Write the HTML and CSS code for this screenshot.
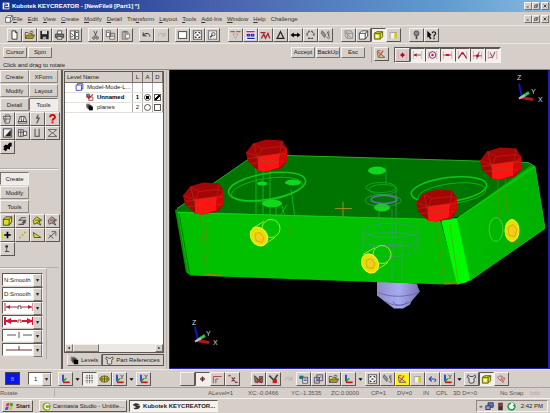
FILE: index.html
```
<!DOCTYPE html>
<html lang="en">
<head>
    <meta charset="UTF-8">
    <meta name="viewport" content="width=device-width, initial-scale=1.0">
    <title>Kubotek KEYCREATOR</title>
    <link rel="stylesheet" href="styles.css">
</head>
<body>
    <!-- Icon set, 12 x 12 grid -->
    <svg class="icon-defs" aria-hidden="true">
        <symbol id="i-app" viewBox="0 0 12 12"><rect x="1" y="1" width="10" height="10" fill="#fff"/><path d="M3 3h4l2 2H4v3h6M3 9h7" stroke="#112a80" stroke-width="1.4" fill="none"/></symbol>
        <symbol id="i-new" viewBox="0 0 12 12"><path d="M3 1h4l2 2v8H3z" fill="#fff" stroke="#222"/><path d="M7 1v2h2" fill="none" stroke="#222"/></symbol>
        <symbol id="i-open" viewBox="0 0 12 12"><path d="M1 10V3h3l1 1h4v2" fill="#f2e48a" stroke="#443"/><path d="M1 10l2-4h9l-2 4z" fill="#b79b20" stroke="#443"/><path d="M7 2c2-1 3 0 3 1" fill="none" stroke="#222"/></symbol>
        <symbol id="i-save" viewBox="0 0 12 12"><path d="M1 1h10v10H1z" fill="#222"/><path d="M3 1h6v4H3z" fill="#ddd"/><path d="M4 8h4v3H4z" fill="#aaa"/></symbol>
        <symbol id="i-print" viewBox="0 0 12 12"><path d="M4 1h5l-1 4H3z" fill="#fff" stroke="#444"/><path d="M1 5h10v4H1z" fill="#777" stroke="#333"/><path d="M3 8h6v3H3z" fill="#eee" stroke="#333"/></symbol>
        <symbol id="i-preview" viewBox="0 0 12 12"><path d="M1 1h5v10H1zM7 1h4v10H7z" fill="#fff" stroke="#444"/><path d="M2 4l3 3M8 3h2M8 8h2M2 8h2" stroke="#222"/></symbol>
        <symbol id="i-cut" viewBox="0 0 12 12"><path d="M4 1l3 7M8 1L5 8" stroke="#444" fill="none"/><circle cx="4" cy="9.500" r="1.500" fill="none" stroke="#444"/><circle cx="8" cy="9.500" r="1.500" fill="none" stroke="#444"/></symbol>
        <symbol id="i-copy" viewBox="0 0 12 12"><path d="M1 1h5v7H1zM5 4h6v7H5z" fill="#fff" stroke="#555"/><path d="M6 6h4M6 8h4M2 3h3" stroke="#555"/></symbol>
        <symbol id="i-paste" viewBox="0 0 12 12"><path d="M2 2h7v9H2z" fill="#b5ada5" stroke="#777"/><path d="M4 1h3v2H4z" fill="#666"/><path d="M6 5h5v5H6z" fill="#eee" stroke="#777"/></symbol>
        <symbol id="i-undo" viewBox="0 0 12 12"><path d="M2 3v4h4M2 7c2-4 8-4 8 1" fill="none" stroke="#333" stroke-width="1.200"/></symbol>
        <symbol id="i-redo" viewBox="0 0 12 12"><path d="M10 3v4H6M10 7c-2-4-8-4-8 1" fill="none" stroke="#b5aea8" stroke-width="1.200"/></symbol>
        <symbol id="i-window" viewBox="0 0 12 12"><rect x="1" y="2" width="10" height="8" fill="#fff" stroke="#333"/></symbol>
        <symbol id="i-fit" viewBox="0 0 12 12"><rect x="1" y="1" width="10" height="10" fill="#fff" stroke="#444"/><path d="M3 5V3h2M7 3h2v2M9 7v2H7M5 9H3V7M5 5l2 2M7 5L5 7" stroke="#222" fill="none"/></symbol>
        <symbol id="i-zoom" viewBox="0 0 12 12"><rect x="1" y="1" width="10" height="10" fill="#eee" stroke="#666"/><circle cx="7" cy="5" r="2" fill="none" stroke="#444"/><path d="M6 6L3 9" stroke="#444" stroke-width="1.500"/></symbol>
        <symbol id="i-mask" viewBox="0 0 12 12"><path d="M0 2h5M7 2h5" stroke="#e33" stroke-width="1.600"/><path d="M3 5l3 5 3-5z" fill="#ddd" stroke="#a99"/></symbol>
        <symbol id="i-select" viewBox="0 0 12 12"><rect x="0" y="0" width="12" height="12" fill="#eef"/><path d="M1 2h10" stroke="#d22" stroke-width="1.600"/><path d="M2 5h3v2H2zM7 5h3v2H7zM2 10h9" stroke="#22a" fill="none" stroke-width="1.300"/></symbol>
        <symbol id="i-wave" viewBox="0 0 12 12"><path d="M0 3h6M1 10l3-5 2 5 3-6 2 6" stroke="#a02030" fill="none" stroke-width="1.500"/></symbol>
        <symbol id="i-delta" viewBox="0 0 12 12"><path d="M6 2l4 8H2z" fill="none" stroke="#222" stroke-width="1.500"/></symbol>
        <symbol id="i-width" viewBox="0 0 12 12"><path d="M2 6h8" stroke="#000" stroke-width="2"/><path d="M0 6l4-3v6zM12 6L8 3v6z"/></symbol>
        <symbol id="i-rotate" viewBox="0 0 12 12"><path d="M5 1L2 4v3M7 1l3 3v3M3 10h6" stroke="#444" fill="none" stroke-width="1.400" stroke-dasharray="3 1"/></symbol>
        <symbol id="i-spray" viewBox="0 0 12 12"><path d="M2 1l4 4-1 4-4-5zM8 2l3 8M10 1v6M7 8l3 3" stroke="#555" fill="#999"/></symbol>
        <symbol id="i-wire" viewBox="0 0 12 12"><path d="M2 1h7l2 3v6H4L2 7zM2 1l3 3h6M5 4v6M2 3l8 7" stroke="#888" fill="none"/></symbol>
        <symbol id="i-box" viewBox="0 0 12 12"><path d="M1 4h7v7H1zM1 4l3-3h7L8 4M11 1v6l-3 4" stroke="#333" fill="#fff"/></symbol>
        <symbol id="i-solid" viewBox="0 0 12 12"><path d="M1 4l3-2h7v6l-3 3H1z" fill="#d9d927" stroke="#555510"/><path d="M1 4h7v7M8 4l3-2" stroke="#555510" fill="none"/><path d="M3 6h3v3H3z" fill="#fff"/></symbol>
        <symbol id="i-slab" viewBox="0 0 12 12"><path d="M2 3h7v7H2z" fill="#f4f4d8"/><path d="M7 3h3v7H7z" fill="#cccc10"/><path d="M2 3h8M2 10V3" stroke="#999" fill="none"/></symbol>
        <symbol id="i-bulb" viewBox="0 0 12 12"><circle cx="6" cy="4" r="3" fill="#888" stroke="#444"/><path d="M5 7h2v4H5z" fill="#444"/></symbol>
        <symbol id="i-help" viewBox="0 0 12 12"><path d="M1 1l5 5-2 1 2 3-2 1-1-3-2 1z"/><path d="M7 4c0-3 4-2 4 0 0 2-2 1-2 4M9 9v2" stroke="#222" fill="none" stroke-width="1.500"/></symbol>
        <symbol id="i-redhelp" viewBox="0 0 12 12"><path d="M3 4c0-4 6-4 6 0 0 2-3 1-3 4M6 9v2" stroke="#e00000" fill="none" stroke-width="2.200"/></symbol>
        <symbol id="i-plane" viewBox="0 0 12 12"><path d="M1 3l9 7H2z" fill="#d7e06a" stroke="#555"/><path d="M8 2L3 9M1 2h4" stroke="#d33" fill="none" stroke-width="1.300"/></symbol>
        <symbol id="i-point" viewBox="0 0 12 12"><path d="M1 1v10M11 1v10" stroke="#e2a0a8"/><circle cx="6" cy="6" r="2" fill="#b00020"/><path d="M6 3v6M3 6h6" stroke="#b00020"/></symbol>
        <symbol id="i-endpt" viewBox="0 0 12 12"><path d="M1 1v10M11 1v10" stroke="#e2a0a8"/><path d="M2 6h8" stroke="#444"/><path d="M1 6l4-2v4z" fill="#d01030"/></symbol>
        <symbol id="i-center" viewBox="0 0 12 12"><path d="M1 1v10M11 1v10" stroke="#e2a0a8"/><circle cx="6" cy="6" r="4" fill="none" stroke="#426"/><circle cx="6" cy="6" r="1.500" fill="#d01030"/></symbol>
        <symbol id="i-mid" viewBox="0 0 12 12"><path d="M1 1v10M11 1v10" stroke="#e2a0a8"/><path d="M1 6h10" stroke="#444"/><path d="M4 6h4" stroke="#d01030" stroke-width="2.500"/></symbol>
        <symbol id="i-curve" viewBox="0 0 12 12"><path d="M1 1v10M11 1v10" stroke="#e2a0a8"/><path d="M1 10l4-6h2l4 6" stroke="#633" fill="none" stroke-width="1.300"/><circle cx="6" cy="4" r="1.500" fill="#d01030"/></symbol>
        <symbol id="i-cross" viewBox="0 0 12 12"><path d="M1 1v10M11 1v10" stroke="#e2a0a8"/><path d="M1 7h10M8 2L5 11" stroke="#633" fill="none"/><circle cx="6" cy="7" r="1.800" fill="#b01030"/></symbol>
        <symbol id="i-tan" viewBox="0 0 12 12"><path d="M1 1v10M11 1v10" stroke="#e2a0a8"/><path d="M3 3l3 6 3-7M2 9h3" stroke="#866" fill="none" stroke-width="1.300"/></symbol>
        <symbol id="i-pot" viewBox="0 0 12 12"><path d="M1 3h9l-2 8H3zM3 3l1-2h4l1 2M1 6h8M4 4v6" stroke="#555" fill="#ddd"/></symbol>
        <symbol id="i-dome" viewBox="0 0 12 12"><path d="M1 9l2-6h6l2 6zM1 9h10v2H1zM4 3l1 6M8 3L7 9" stroke="#444" fill="#eee"/></symbol>
        <symbol id="i-tool" viewBox="0 0 12 12"><path d="M7 1L5 5h3l-3 6" stroke="#554" fill="none" stroke-width="1.500"/></symbol>
        <symbol id="i-shade" viewBox="0 0 12 12"><path d="M1 1h10v10H1z" fill="#eee" stroke="#333"/><path d="M10 2v8H3z" fill="#222"/></symbol>
        <symbol id="i-sheet" viewBox="0 0 12 12"><path d="M1 2h6v8H1zM7 4h4v5H7zM1 5h6M4 2v8" stroke="#444" fill="#e8e8e8"/></symbol>
        <symbol id="i-u" viewBox="0 0 12 12"><path d="M3 1v9h5V1" stroke="#666" fill="none" stroke-width="1.500"/></symbol>
        <symbol id="i-hour" viewBox="0 0 12 12"><path d="M1 2h10L6 6l5 4H1l5-4z" stroke="#444" fill="#eee"/></symbol>
        <symbol id="i-stamp" viewBox="0 0 12 12"><path d="M1 5l3-2 2 1 2-3h3v4l-2 1v3l-3-1-2 3-3-2 1-2z"/></symbol>
        <symbol id="i-cube" viewBox="0 0 12 12"><path d="M1 4l3-3h7v6l-3 4H1z" fill="#dede20" stroke="#333"/><path d="M1 4h7v7M8 4l3-3" stroke="#333" fill="none"/></symbol>
        <symbol id="i-spring" viewBox="0 0 12 12"><path d="M10 2H5L2 5h7L6 8h4M1 10h6l3-5" stroke="#555" fill="none" stroke-width="1.300"/></symbol>
        <symbol id="i-gem" viewBox="0 0 12 12"><path d="M1 5l4-4 6 4-3 2 2 4-5-3-3 2z" fill="#dede20" stroke="#443"/><path d="M3 5h6L5 9" stroke="#443" fill="none"/></symbol>
        <symbol id="i-gem2" viewBox="0 0 12 12"><path d="M1 5l4-4 6 4-3 2 2 4-5-3-3 2z" fill="#c9a5a5" stroke="#544"/><path d="M3 5h6L5 9" stroke="#544" fill="none"/></symbol>
        <symbol id="i-plus" viewBox="0 0 12 12"><path d="M6 2v8M2 6h8" stroke="#000" stroke-width="2"/><path d="M0 3v8" stroke="#cc0"/></symbol>
        <symbol id="i-dots" viewBox="0 0 12 12"><path d="M2 9h2M5 6h2M8 3h2" stroke="#b0a800" stroke-width="2"/></symbol>
        <symbol id="i-wedge" viewBox="0 0 12 12"><path d="M1 3l9 6H2z" fill="#e2e030" stroke="#443"/></symbol>
        <symbol id="i-arrow" viewBox="0 0 12 12"><path d="M1 10l8-7M5 2h5v5M2 6l5 4" stroke="#444" fill="none"/></symbol>
        <symbol id="i-pawn" viewBox="0 0 12 12"><path d="M4 2h2v2H4zM5 5v4M3 9h5" stroke="#333" fill="#333"/></symbol>
        <symbol id="i-axis" viewBox="0 0 12 12"><path d="M3 1v8" stroke="#1733d0" stroke-width="2"/><path d="M3 9l4-4" stroke="#12a020" stroke-width="1.600"/><path d="M3 10h8" stroke="#d01010" stroke-width="2"/></symbol>
        <symbol id="i-axis2" viewBox="0 0 12 12"><path d="M3 1v8" stroke="#1733d0" stroke-width="2"/><path d="M3 10h8" stroke="#d01010" stroke-width="2"/><path d="M3 9l4-4" stroke="#12a020" stroke-width="1.600"/><path d="M7 1l2 2 2-2M9 3v3" stroke="#444" fill="none"/></symbol>
        <symbol id="i-grid" viewBox="0 0 12 12"><path d="M3 1v10M6 1v10M9 1v10" stroke="#333" stroke-dasharray="2 1"/><path d="M1 4h10M1 8h10" stroke="#777" stroke-dasharray="1 1"/></symbol>
        <symbol id="i-globe" viewBox="0 0 12 12"><ellipse cx="6" cy="6" rx="5.500" ry="3.500" fill="#d8d22c" stroke="#55500e"/><path d="M6 2v8M1 6h10M3 3v6M9 3v6" stroke="#55500e"/></symbol>
        <symbol id="i-target" viewBox="0 0 12 12"><path d="M6 3v6M3 6h6" stroke="#222"/><circle cx="6" cy="6" r="2" fill="none" stroke="#b01020"/></symbol>
        <symbol id="i-corner" viewBox="0 0 12 12"><path d="M1 11V3h10M4 11V6h3" stroke="#a33" fill="none"/></symbol>
        <symbol id="i-xform" viewBox="0 0 12 12"><path d="M1 2h3M5 4l4 5M9 4L5 9M9 10h3" stroke="#733" fill="none" stroke-width="1.300"/></symbol>
        <symbol id="i-del" viewBox="0 0 12 12"><path d="M1 2l4 3v5H2zM7 3h4v7H7z" fill="#777" stroke="#444"/><path d="M4 5l6 6M10 5l-6 6" stroke="#d01010" stroke-width="1.400"/></symbol>
        <symbol id="i-del2" viewBox="0 0 12 12"><path d="M1 2l5 5M11 1L6 8" stroke="#444" stroke-width="2"/><path d="M5 6h5v5H5z" fill="#cc1515"/></symbol>
        <symbol id="i-props" viewBox="0 0 12 12"><path d="M1 2h5v4H1z" fill="#177"/><path d="M5 4h6v7H5z" fill="#fff" stroke="#345"/><path d="M6 6h4M6 8h4" stroke="#226"/></symbol>
        <symbol id="i-frame" viewBox="0 0 12 12"><path d="M1 4h6v7H1zM4 1h7v7H4z" stroke="#446" fill="none"/><path d="M3 9l6-6" stroke="#333"/></symbol>
        <symbol id="i-return" viewBox="0 0 12 12"><path d="M2 6h6c3 0 2 3 0 3M5 3L2 6l3 3" stroke="#334bb0" fill="none" stroke-width="1.400"/></symbol>
        <symbol id="i-part" viewBox="0 0 12 12"><path d="M2 1l2 2h4l2-2 1 3-2 1v5l-2 1H5l-2-1V5L1 4z" stroke="#333" fill="#ddd"/></symbol>
        <symbol id="i-redwire" viewBox="0 0 12 12"><path d="M1 4l4-2 5 3-2 5-4-3zM1 4l3 3 6-2M5 2l3 8" stroke="#b66" fill="none"/></symbol>
        <symbol id="i-model" viewBox="0 0 12 12"><path d="M1 3h8v8H1zM3 3V1h8v8H9" fill="#fff" stroke="#2424c8" stroke-width="1.200"/></symbol>
        <symbol id="i-level" viewBox="0 0 12 12"><path d="M1 1h6v6H1z" fill="#777"/><path d="M3 3h6v6H3z" fill="#444"/><path d="M5 5h6v6H5z"/></symbol>
        <symbol id="i-levelon" viewBox="0 0 12 12"><path d="M1 1h6v6H1z" fill="#777"/><path d="M5 6h6v5H5z" fill="#fff" stroke="#900"/><path d="M2 4l3 4 6-6" stroke="#d01020" fill="none" stroke-width="1.600"/></symbol>
        <symbol id="i-min" viewBox="0 0 12 12"><path d="M2 9h6" stroke="#000" stroke-width="2"/></symbol>
        <symbol id="i-restore" viewBox="0 0 12 12"><path d="M4 1h7v6H9M1 5h7v6H1z" stroke="#000" fill="none" stroke-width="1.500"/></symbol>
        <symbol id="i-close" viewBox="0 0 12 12"><path d="M2 2l8 8M10 2l-8 8" stroke="#000" stroke-width="2"/></symbol>
        <symbol id="i-down" viewBox="0 0 12 12"><path d="M1 4h10L6 10z"/></symbol>
        <symbol id="i-left" viewBox="0 0 12 12"><path d="M8 2v8L3 6z"/></symbol>
        <symbol id="i-right" viewBox="0 0 12 12"><path d="M4 2v8l5-4z"/></symbol>
        <symbol id="i-flag" viewBox="0 0 12 12"><path d="M2 2l4-1-1 4-4 1z" fill="#e04020"/><path d="M7 1l4 1-1 4-4-1z" fill="#40a030"/><path d="M1 7l4-1-1 4-4 1z" fill="#3050d0"/><path d="M6 6l4 1-1 4-4-1z" fill="#e0c020"/></symbol>
        <symbol id="i-camtasia" viewBox="0 0 12 12"><circle cx="6" cy="6" r="5.500" fill="#8bac1f"/><path d="M9 4a3 3 0 1 0 0 4" fill="none" stroke="#fff" stroke-width="1.800"/></symbol>
        <symbol id="i-key" viewBox="0 0 12 12"><path d="M1 4c3-4 8-2 9 0L6 5h5c0 5-7 6-9 3l4-1z" fill="#333"/></symbol>
        <symbol id="i-net" viewBox="0 0 12 12"><path d="M4 1h7v6H4z" fill="#5577cc" stroke="#224"/><path d="M1 5h6v5H1z" fill="#99a" stroke="#224"/></symbol>
        <symbol id="i-bar" viewBox="0 0 12 12"><path d="M3 1h6v10H3z" fill="#333"/><path d="M4 2h4v4H4z" fill="#d02020"/></symbol>
        <symbol id="i-sync" viewBox="0 0 12 12"><circle cx="6" cy="6" r="5.500" fill="#1c9c4c"/><path d="M6 3a3 3 0 1 0 3 3M6 1v4l3-2z" fill="#fff" stroke="#fff"/></symbol>
        <symbol id="i-blank" viewBox="0 0 12 12"></symbol>
    </svg>

    <div class="app">
        <header class="titlebar">
            <svg class="icon"><use href="#i-app"/></svg>
            <h1>Kubotek KEYCREATOR - [NewFile9 [Part1] *]</h1>
            <div class="window-buttons">
                <button aria-label="Minimize"><svg><use href="#i-min"/></svg></button>
                <button aria-label="Restore"><svg><use href="#i-restore"/></svg></button>
                <button class="close" aria-label="Close"><svg><use href="#i-close"/></svg></button>
            </div>
        </header>

        <nav class="menubar">
            <svg class="icon"><use href="#i-box"/></svg>
            <a href="#"><u>F</u>ile</a>
            <a href="#"><u>E</u>dit</a>
            <a href="#"><u>V</u>iew</a>
            <a href="#"><u>C</u>reate</a>
            <a href="#"><u>M</u>odify</a>
            <a href="#"><u>D</u>etail</a>
            <a href="#">Tra<u>n</u>sform</a>
            <a href="#"><u>L</u>ayout</a>
            <a href="#"><u>T</u>ools</a>
            <a href="#"><u>A</u>dd-Ins</a>
            <a href="#"><u>W</u>indow</a>
            <a href="#"><u>H</u>elp</a>
            <a href="#">Challenge</a>
            <div class="window-buttons">
                <button aria-label="Minimize part"><svg><use href="#i-min"/></svg></button>
                <button aria-label="Restore part"><svg><use href="#i-restore"/></svg></button>
                <button class="close" aria-label="Close part"><svg><use href="#i-close"/></svg></button>
            </div>
        </nav>

        <div class="toolbar">
            <div class="group">
                <button class="tool" aria-label="New"><svg><use href="#i-new"/></svg></button>
                <button class="tool" aria-label="Open"><svg><use href="#i-open"/></svg></button>
                <button class="tool" aria-label="Save"><svg><use href="#i-save"/></svg></button>
                <button class="tool" aria-label="Print"><svg><use href="#i-print"/></svg></button>
                <button class="tool" aria-label="Preview"><svg><use href="#i-preview"/></svg></button>
            </div>
            <div class="group">
                <button class="tool" aria-label="Cut"><svg><use href="#i-cut"/></svg></button>
                <button class="tool" aria-label="Copy"><svg><use href="#i-copy"/></svg></button>
                <button class="tool" aria-label="Paste"><svg><use href="#i-paste"/></svg></button>
            </div>
            <div class="group">
                <button class="tool" aria-label="Undo"><svg><use href="#i-undo"/></svg></button>
                <button class="tool" aria-label="Redo"><svg><use href="#i-redo"/></svg></button>
            </div>
            <div class="group">
                <button class="tool" aria-label="Zoom window"><svg><use href="#i-window"/></svg></button>
                <button class="tool" aria-label="Zoom fit"><svg><use href="#i-fit"/></svg></button>
                <button class="tool" aria-label="Zoom"><svg><use href="#i-zoom"/></svg></button>
            </div>
            <div class="group wide">
                <button class="tool" aria-label="Mask"><svg><use href="#i-mask"/></svg></button>
                <button class="tool" aria-label="Select"><svg><use href="#i-select"/></svg></button>
                <button class="tool" aria-label="Chain"><svg><use href="#i-wave"/></svg></button>
                <button class="tool" aria-label="Delta"><svg><use href="#i-delta"/></svg></button>
                <button class="tool" aria-label="Distance"><svg><use href="#i-width"/></svg></button>
                <button class="tool" aria-label="Rotate"><svg><use href="#i-rotate"/></svg></button>
                <button class="tool" aria-label="Attributes"><svg><use href="#i-spray"/></svg></button>
            </div>
            <div class="group wide">
                <button class="tool" aria-label="Wireframe"><svg><use href="#i-wire"/></svg></button>
                <button class="tool" aria-label="Hidden line"><svg><use href="#i-box"/></svg></button>
                <button class="tool pressed" aria-label="Shaded"><svg><use href="#i-solid"/></svg></button>
                <button class="tool" aria-label="Section"><svg><use href="#i-slab"/></svg></button>
            </div>
            <div class="group wide">
                <button class="tool" aria-label="Tip"><svg><use href="#i-bulb"/></svg></button>
                <button class="tool" aria-label="Help"><svg><use href="#i-help"/></svg></button>
            </div>
        </div>

        <div class="prompt">
            <div class="conversation">
                <button class="text-button">Cursor</button>
                <button class="text-button">Spin</button>
                <p>Click and drag to rotate</p>
            </div>
            <div class="answers">
                <button class="text-button">Accept</button>
                <button class="text-button">BackUp</button>
                <button class="text-button">Esc</button>
            </div>
            <div class="snaps">
                <button class="tool" aria-label="Plane"><svg><use href="#i-plane"/></svg></button>
                <div class="snap-group">
                    <button class="tool" aria-label="Snap point"><svg><use href="#i-point"/></svg></button>
                    <button class="tool pressed" aria-label="Snap end"><svg><use href="#i-endpt"/></svg></button>
                    <button class="tool pressed" aria-label="Snap center"><svg><use href="#i-center"/></svg></button>
                    <button class="tool pressed" aria-label="Snap middle"><svg><use href="#i-mid"/></svg></button>
                    <button class="tool pressed" aria-label="Snap curve"><svg><use href="#i-curve"/></svg></button>
                    <button class="tool pressed" aria-label="Snap intersection"><svg><use href="#i-cross"/></svg></button>
                    <button class="tool pressed" aria-label="Snap tangent"><svg><use href="#i-tan"/></svg></button>
                </div>
            </div>
        </div>

        <main class="workspace">
            <aside class="palette">
                <section class="panel">
                    <div class="tabs">
                        <button>Create</button><button>XForm</button>
                        <button>Modify</button><button>Layout</button>
                        <button>Detail</button><button class="active">Tools</button>
                    </div>
                    <div class="icons">
                        <button class="tool" aria-label="Verify"><svg><use href="#i-pot"/></svg></button>
                        <button class="tool" aria-label="Surface"><svg><use href="#i-dome"/></svg></button>
                        <button class="tool" aria-label="Macro"><svg><use href="#i-tool"/></svg></button>
                        <button class="tool" aria-label="Query"><svg><use href="#i-redhelp"/></svg></button>
                        <button class="tool" aria-label="Shade"><svg><use href="#i-shade"/></svg></button>
                        <button class="tool" aria-label="Sheet"><svg><use href="#i-sheet"/></svg></button>
                        <button class="tool" aria-label="Channel"><svg><use href="#i-u"/></svg></button>
                        <button class="tool" aria-label="Mirror"><svg><use href="#i-hour"/></svg></button>
                        <button class="tool" aria-label="Pattern"><svg><use href="#i-stamp"/></svg></button>
                    </div>
                </section>
                <section class="panel">
                    <div class="tabs single">
                        <button class="active">Create</button>
                        <button>Modify</button>
                        <button>Tools</button>
                    </div>
                    <div class="icons">
                        <button class="tool" aria-label="Block"><svg><use href="#i-cube"/></svg></button>
                        <button class="tool" aria-label="Spring"><svg><use href="#i-spring"/></svg></button>
                        <button class="tool" aria-label="Solid"><svg><use href="#i-gem"/></svg></button>
                        <button class="tool" aria-label="Cut solid"><svg><use href="#i-gem2"/></svg></button>
                        <button class="tool" aria-label="Add"><svg><use href="#i-plus"/></svg></button>
                        <button class="tool" aria-label="Points"><svg><use href="#i-dots"/></svg></button>
                        <button class="tool" aria-label="Wedge"><svg><use href="#i-wedge"/></svg></button>
                        <button class="tool" aria-label="Vector"><svg><use href="#i-arrow"/></svg></button>
                        <button class="tool" aria-label="Part"><svg><use href="#i-pawn"/></svg></button>
                    </div>
                </section>
                <section class="panel styles">
                    <div class="combo"><select aria-label="N smooth"><option>N:Smooth</option></select></div>
                    <div class="combo"><select aria-label="D smooth"><option>D:Smooth</option></select></div>
                    <div class="combo"><select aria-label="Witness style"><option></option></select>
                        <svg viewBox="0 0 30 10"><path d="M1 1v8M29 1v8M2 5h11M18 5h10" stroke="#b02038" fill="none"/><path d="M2 5l4-2v4zM28 5l-4-2v4z" fill="#b02038"/><path d="M14 7V4h3v3" stroke="#444" fill="none"/></svg></div>
                    <div class="combo"><select aria-label="Arrow style"><option></option></select>
                        <svg viewBox="0 0 30 10"><path d="M1 1v8M29 1v8M2 5h11M18 5h10" stroke="#e01038" stroke-width="2" fill="none"/><path d="M1 5l6-3v6zM29 5l-6-3v6z" fill="#e01038"/><path d="M14 7V4h3v3" stroke="#844" fill="none"/></svg></div>
                    <div class="combo"><select aria-label="Line style"><option></option></select>
                        <svg viewBox="0 0 30 10"><path d="M3 5h9M19 5h9M15 2v6" stroke="#555" fill="none"/></svg></div>
                    <div class="combo"><select aria-label="Line width"><option></option></select>
                        <svg viewBox="0 0 30 10"><path d="M2 6h26M15 2v4" stroke="#633" fill="none"/></svg></div>
                </section>
            </aside>

            <aside class="levels">
                <div class="tree">
                    <table>
                        <thead>
                            <tr><th class="name">Level Name</th><th>L</th><th>A</th><th>D</th></tr>
                        </thead>
                        <tbody>
                            <tr>
                                <td class="name root"><svg><use href="#i-model"/></svg>Model-Mode-L...</td>
                                <td></td><td></td><td></td>
                            </tr>
                            <tr class="current">
                                <td class="name"><svg><use href="#i-levelon"/></svg>Unnamed</td>
                                <td>1</td>
                                <td><input type="radio" name="active" aria-label="Unnamed active" checked></td>
                                <td><input type="checkbox" aria-label="Unnamed displayed" checked></td>
                            </tr>
                            <tr>
                                <td class="name"><svg><use href="#i-level"/></svg>planes</td>
                                <td>2</td>
                                <td><input type="radio" name="active" aria-label="planes active"></td>
                                <td><input type="checkbox" aria-label="planes displayed"></td>
                            </tr>
                        </tbody>
                    </table>
                    <div class="scrollbar">
                        <button aria-label="Scroll left"><svg><use href="#i-left"/></svg></button>
                        <div class="thumb"></div>
                        <button aria-label="Scroll right"><svg><use href="#i-right"/></svg></button>
                    </div>
                </div>
                <div class="level-tabs">
                    <button class="active"><svg><use href="#i-level"/></svg>Levels</button>
                    <button><svg><use href="#i-part"/></svg>Part References</button>
                </div>
            </aside>

            <section class="viewport">
                <svg viewBox="170 71 378 297" role="img" aria-label="Shaded model of the part">
                    <defs>
                        <linearGradient id="plug" x1="0" x2="1"><stop offset="0" stop-color="#8c8cc8"/><stop offset="0.5" stop-color="#aaaaf2"/><stop offset="1" stop-color="#7474b4"/></linearGradient>
                        <linearGradient id="side" x1="0" x2="1"><stop offset="0" stop-color="#00bc00"/><stop offset="1" stop-color="#00b000"/></linearGradient>
                        <g id="bolt">
                            <path d="M0 13L7 4 20 0 36 1 41 9 41 22 35 29 20 32 12 31 2 22z" fill="#a40606"/>
                            <path d="M12 17L34 14 33 28 20 32 12 31z" fill="#ff1414"/>
                            <path d="M34 14L41 9V22L33 28z" fill="#d00808"/>
                            <path d="M0 13L12 17 13 31M7 4L16 9 34 7 41 9M16 9L12 17 34 14 36 1" stroke="#c82020" fill="none" stroke-width="0.600"/>
                            <path d="M2 19L40 14M5 24L38 22M8 5l6 26M15 21h17" stroke="#b04018" fill="none" stroke-width="0.500"/>
                        </g>
                        <g id="triad" fill="none" stroke-width="2">
                            <path d="M1 0L-2-14" stroke="#1414b0"/>
                            <path d="M0 0L8-5" stroke="#30c840" stroke-width="3"/>
                            <path d="M0 0l12 2" stroke="#b01818" stroke-width="3"/>
                            <path d="M-2 1l6-3" stroke="#b8b8c8"/>
                        </g>
                    </defs>

                    <!-- plug below the block -->
                    <path d="M377 282L417 284 418 288 420 292 412 301 410 305 403 309 394 309 386 303 377 296z" fill="url(#plug)"/>
                    <path d="M378 293c12 5 28 5 41 0M386 302c7 5 17 5 25 0M393 302c1 5 12 5 14 0" stroke="#62629c" fill="none" stroke-width="0.800"/>

                    <!-- block faces -->
                    <path d="M177 209L248 160 264 156 287 156 360 158 528 163 535 167 464 216 440 221 177 213z" fill="#007400"/>
                    <path d="M176 212L300 216 440 220 458 284 446 285 360 282 190 276 187 273z" fill="#00c000"/>
                    <path d="M457 219L464 214 531 166 535 167 545 229 470 281 462 282z" fill="url(#side)"/>
                    <path d="M441 221L457 219 470 280 466 283 457 285z" fill="#00fa00"/>
                    <path d="M177 209L248 160M287 156L360 158 528 163 535 167 545 229 470 281" stroke="#20b020" fill="none"/>
                    <path d="M177 213L440 220 457 219 535 167" stroke="#10d410" fill="none"/>
                    <path d="M176 210L187 273" stroke="#009000" fill="none" stroke-width="2"/>
                    <path d="M179 214l11 62" stroke="#004800" fill="none" stroke-width="0.600"/>
                    <path d="M444 284h16M206 275l16 1" stroke="#d07000" fill="none" stroke-width="2" opacity="0.600"/>

                    <!-- pockets and bores -->
                    <g fill="none" stroke="#10c818">
                        <ellipse cx="267" cy="187" rx="39" ry="13" transform="rotate(-9 267 187)" stroke-width="1.500"/>
                        <ellipse cx="267" cy="190" rx="36" ry="11" transform="rotate(-9 267 190)" stroke-width="0.700"/>
                        <ellipse cx="449" cy="190" rx="38" ry="12" transform="rotate(-7 449 190)" stroke-width="1.500"/>
                        <ellipse cx="452" cy="194" rx="34" ry="10" transform="rotate(-7 452 194)" stroke-width="0.700"/>
                        <ellipse cx="381" cy="188" rx="15" ry="5" stroke-width="0.600"/>
                        <ellipse cx="383" cy="190" rx="14" ry="5" stroke-width="0.600"/>
                        <path d="M256 164v52M263 167v58M270 170v50M291 190l4 28M287 205l-8 13M276 207v16M282 206l3 12" stroke-width="0.800"/>
                    </g>
                    <g fill="#10d81c">
                        <ellipse cx="293" cy="183" rx="8" ry="3"/>
                        <ellipse cx="272" cy="204" rx="10" ry="4"/>
                        <ellipse cx="377" cy="171" rx="9" ry="4"/>
                        <ellipse cx="382" cy="208" rx="8" ry="4"/>
                        <ellipse cx="262" cy="184" rx="5" ry="2"/>
                    </g>
                    <g fill="none" stroke="#3c9c70" stroke-width="0.700">
                        <ellipse cx="383" cy="201" rx="18" ry="6"/>
                        <ellipse cx="384" cy="200" rx="13" ry="4" stroke="#58789c" stroke-width="1.500"/>
                        <ellipse cx="391" cy="231" rx="28" ry="7"/>
                        <ellipse cx="390" cy="240" rx="27" ry="7"/>
                        <ellipse cx="391" cy="251" rx="25" ry="6"/>
                        <path d="M363 231v20M418 231v21M379 210v20M392 210v72M402 240v42M386 168v16M396 190v50"/>
                    </g>
                    <g fill="none" stroke="#a06a10" stroke-width="0.700" opacity="0.700">
                        <path d="M200 213l6 62M205 213l3 40M213 220h-14M270 228h18v8h-18M436 220l8 62M450 225l8 57M498 178v44M505 176l2 40M510 243h12"/>
                    </g>

                    <use href="#bolt" x="246" y="140"/>
                    <use href="#bolt" x="183" y="183"/>
                    <use href="#bolt" x="480" y="148"/>
                    <use href="#bolt" x="416" y="190"/>

                    <!-- brass plugs -->
                    <g stroke="#9fe62c" fill="none">
                        <ellipse cx="271" cy="229" rx="9" ry="9"/>
                        <ellipse cx="382" cy="255" rx="9" ry="9"/>
                        <ellipse cx="496" cy="230" rx="7" ry="12" stroke="#40d030"/>
                        <path d="M252 229l12-7M264 245l11-7M363 255l12-7M376 271l12-8"/>
                    </g>
                    <g fill="#e8e000" stroke="#fff23a">
                        <ellipse cx="259" cy="237" rx="8" ry="10" transform="rotate(-35 259 237)"/>
                        <ellipse cx="370" cy="264" rx="8" ry="10" transform="rotate(-30 370 264)"/>
                        <ellipse cx="512" cy="231" rx="7" ry="11"/>
                    </g>
                    <g fill="#ffc820" stroke="#a89800" stroke-width="0.600">
                        <path d="M255 234l5-1 4 5-2 5-6-2zM366 261l5-2 4 5-2 5-6-1zM508 228l5-3 4 5-2 7-6-1z"/>
                    </g>

                    <path d="M335 209h17M343 202v15" stroke="#9a8a20" fill="none"/>

                    <use href="#triad" x="197" y="341"/>
                    <use href="#triad" x="521" y="98"/>
                    <g class="axis-label">
                        <text x="192" y="325">Z</text><text x="206" y="336">Y</text><text x="213" y="345">X</text>
                        <text x="517" y="80">Z</text><text x="531" y="94">Y</text><text x="538" y="102">X</text>
                    </g>
                </svg>
            </section>
        </main>

        <div class="toolbar bottom">
            <div class="group">
                <button class="color" aria-label="Color">8</button>
                <div class="combo pen"><select aria-label="Pen"><option>1</option></select></div>
            </div>
            <div class="group">
                <button class="tool" aria-label="View axis"><svg><use href="#i-axis"/></svg></button>
                <button class="drop" aria-label="View axis list"><svg><use href="#i-down"/></svg></button>
                <button class="tool pressed" aria-label="Grid"><svg><use href="#i-grid"/></svg></button>
                <button class="tool" aria-label="World"><svg><use href="#i-globe"/></svg></button>
                <button class="tool" aria-label="Construction plane"><svg><use href="#i-axis2"/></svg></button>
                <button class="drop" aria-label="Construction plane list"><svg><use href="#i-down"/></svg></button>
                <button class="tool" aria-label="View plane"><svg><use href="#i-axis2"/></svg></button>
            </div>
            <div class="group far">
                <button class="tool" aria-label="Empty"><svg><use href="#i-blank"/></svg></button>
                <button class="tool pressed" aria-label="Cursor snap"><svg><use href="#i-target"/></svg></button>
                <button class="tool" aria-label="Corner"><svg><use href="#i-corner"/></svg></button>
                <button class="tool" aria-label="Transform"><svg><use href="#i-xform"/></svg></button>
            </div>
            <div class="group wide">
                <button class="tool" aria-label="Delete"><svg><use href="#i-del"/></svg></button>
                <button class="tool" aria-label="Delete all"><svg><use href="#i-del2"/></svg></button>
                <button class="tool flat" aria-label="Recall" disabled><svg><use href="#i-redo"/></svg></button>
                <button class="tool" aria-label="Properties"><svg><use href="#i-props"/></svg></button>
                <button class="tool" aria-label="Frame"><svg><use href="#i-frame"/></svg></button>
                <button class="tool" aria-label="Open part"><svg><use href="#i-open"/></svg></button>
                <button class="tool" aria-label="Axis"><svg><use href="#i-axis"/></svg></button>
                <button class="drop" aria-label="Axis list"><svg><use href="#i-down"/></svg></button>
                <button class="tool" aria-label="Fit"><svg><use href="#i-fit"/></svg></button>
                <button class="tool" aria-label="Spray"><svg><use href="#i-spray"/></svg></button>
                <button class="tool yellow" aria-label="Measure"><svg><use href="#i-plane"/></svg></button>
                <button class="tool" aria-label="Slab"><svg><use href="#i-slab"/></svg></button>
                <button class="tool" aria-label="Back"><svg><use href="#i-return"/></svg></button>
                <button class="tool" aria-label="Coordinates"><svg><use href="#i-axis2"/></svg></button>
                <button class="drop" aria-label="Coordinates list"><svg><use href="#i-down"/></svg></button>
                <button class="tool" aria-label="Part"><svg><use href="#i-part"/></svg></button>
                <button class="tool pressed" aria-label="Solid"><svg><use href="#i-solid"/></svg></button>
                <button class="tool" aria-label="Mesh"><svg><use href="#i-redwire"/></svg></button>
            </div>
        </div>

        <footer class="status">
            <span>Rotate</span>
            <span class="sunk"></span>
            <span>ALevel=1</span>
            <span>XC:-0.0466</span>
            <span>YC:-1.3535</span>
            <span>ZC:0.0000</span>
            <span>CP=1</span>
            <span>DV=0</span>
            <span>IN</span>
            <span>CPL</span>
            <span>3D D=&gt;0</span>
            <span>No Snap</span>
            <span class="dim">Info</span>
        </footer>

        <div class="taskbar">
            <button class="start"><svg><use href="#i-flag"/></svg>Start</button>
            <button class="task"><svg><use href="#i-camtasia"/></svg>Camtasia Studio - Untitle...</button>
            <button class="task active"><svg><use href="#i-key"/></svg>Kubotek KEYCREATOR...</button>
            <div class="tray">
                <span>«</span>
                <svg><use href="#i-net"/></svg>
                <svg><use href="#i-bar"/></svg>
                <svg><use href="#i-sync"/></svg>
                <time>2:42 PM</time>
            </div>
        </div>
    </div>
</body>
</html>
```
FILE: styles.css
```
* {
    box-sizing: border-box;
}

body {
    margin: 0;
    font-family: 'Liberation Sans', Arial, sans-serif;
    font-size: 6px;
    line-height: 8px;
    color: #222;
    background-color: #d6cfc9;
}

button, select, input {
    margin: 0;
    padding: 0;
    border: none;
    border-radius: 0;
    font: inherit;
    color: inherit;
    background-color: #d6cfc9;
}

svg {
    display: block;
}

.icon-defs {
    display: none;
}

.app {
    display: flex;
    flex-direction: column;
    min-height: 100vh;
}

/* Title and menu */

.titlebar {
    display: flex;
    align-items: center;
    height: 12px;
    padding: 0 1px 0 2px;
    color: white;
    background: linear-gradient(to right, #0f2f8c, #4a62ae 40%, #5f9bd0 80%, #86b8de);
}

.titlebar h1 {
    margin: 0 0 0 2px;
    font-size: 6px;
    line-height: 10px;
    white-space: nowrap;
}

.icon {
    width: 8px;
    height: 8px;
}

.window-buttons {
    display: flex;
    margin-left: auto;
}

.window-buttons button {
    width: 8px;
    height: 8px;
    padding: 1px;
    border: 1px solid;
    border-color: #f4f1ee #77716c #77716c #f4f1ee;
}

.window-buttons .close {
    margin-left: 1px;
}

.window-buttons svg {
    width: 100%;
    height: 100%;
}

.menubar {
    display: flex;
    align-items: center;
    gap: 5px;
    height: 13px;
    padding: 0 1px 0 5px;
}

.menubar .icon {
    margin-right: -5px;
}

.menubar a {
    color: #333;
    text-decoration: none;
}

/* Toolbars */

.toolbar {
    display: flex;
    align-items: center;
    gap: 6px;
    height: 18px;
    padding: 0 7px;
    border-top: 1px solid #eae6e2;
}

.group {
    display: flex;
    align-items: center;
}

.wide {
    margin-left: 2px;
}

.tool {
    flex: none;
    width: 15px;
    height: 14px;
    padding: 1px;
    border: 1px solid;
    border-color: #f4f1ee #5c5753 #5c5753 #f4f1ee;
}

.tool svg {
    width: 11px;
    height: 10px;
    margin: auto;
}

.tool.pressed {
    background-color: #f1eeeb;
    border-color: #5c5753 #f4f1ee #f4f1ee #5c5753;
}

.tool.flat {
    border-color: transparent;
}

.tool.yellow {
    background-color: #ffee22;
}

.prompt {
    display: flex;
    align-items: flex-start;
    height: 27px;
    padding: 3px 3px 0;
    border-top: 1px solid #eae6e2;
    border-bottom: 1px solid #8d8782;
}

.conversation {
    width: 288px;
}

.conversation p {
    clear: both;
    margin: 0;
    padding-top: 3px;
}

.text-button {
    width: 24px;
    height: 11px;
    line-height: 9px;
    border: 1px solid;
    border-color: #f4f1ee #77716c #77716c #f4f1ee;
}

.conversation .text-button {
    float: left;
    margin-right: 1px;
}

.answers {
    display: flex;
    width: 80px;
    gap: 1px;
}

.snaps {
    display: flex;
    gap: 5px;
    padding: 0 2px;
    border-left: 1px solid #b5aea8;
}

.snap-group {
    display: flex;
    border: 1px solid;
    border-color: #5c5753 #f4f1ee #f4f1ee #5c5753;
}

/* Workspace */

.workspace {
    display: flex;
    flex: 1;
}

.palette {
    width: 61px;
    padding-right: 3px;
}

.panel {
    height: 99px;
    border-bottom: 1px solid #b5aea8;
}

.panel + .panel {
    padding-top: 2px;
    border-top: 1px solid #f4f1ee;
}

.tabs {
    display: grid;
    grid-template-columns: repeat(2, 1fr);
    grid-auto-rows: 13px;
    row-gap: 1px;
    margin-bottom: 1px;
}

.tabs.single {
    padding-right: 29px;
    grid-template-columns: 1fr;
}

.tabs button {
    border: 1px solid;
    border-color: #f4f1ee #8d8782 #8d8782 #f4f1ee;
}

.tabs .active {
    background-color: #eeebe8;
    border-color: #77716c #f4f1ee #f4f1ee #77716c;
}

.icons {
    display: grid;
    grid-template-columns: repeat(4, 1fr);
    grid-auto-rows: 14px;
}

.icons .tool {
    width: auto;
}

.panel.styles {
    display: flex;
    flex-direction: column;
    gap: 1px;
    height: auto;
    width: 47px;
    padding: 4px 3px 3px 2px;
    border-right: 1px solid #b5aea8;
    border-bottom: none;
}

.combo {
    position: relative;
    height: 13px;
    border: 1px solid;
    border-color: #5c5753 #f4f1ee #f4f1ee #5c5753;
}

.combo select {
    display: block;
    appearance: none;
    width: 100%;
    height: 100%;
    padding: 0 8px 0 1px;
    background-color: white;
}

/* arrow drawn over the right end of the select */
.combo::after {
    content: "▾";
    position: absolute;
    top: 0;
    right: 0;
    width: 7px;
    height: 100%;
    line-height: 10px;
    text-align: center;
    background-color: #d6cfc9;
    border: 1px solid;
    border-color: #f4f1ee #77716c #77716c #f4f1ee;
    pointer-events: none;
}

.combo svg {
    position: absolute;
    top: 0;
    left: 1px;
    width: 30px;
    height: 10px;
    pointer-events: none;
}

/* Level list */

.levels {
    display: flex;
    flex-direction: column;
    width: 106px;
    border-left: 2px solid #5c5753;
    border-right: 1px solid #b5aea8;
}

.tree {
    display: flex;
    flex: 1;
    flex-direction: column;
    margin: 1px 2px 0 1px;
    background-color: white;
    border: 1px solid #5c5753;
}

.tree table {
    width: 100%;
    table-layout: fixed;
    border-collapse: collapse;
}

.tree th, .tree td {
    width: 10px;
    height: 10px;
    padding: 0;
    line-height: 8px;
    text-align: center;
    white-space: nowrap;
    border-right: 1px solid #b5aea8;
    border-bottom: 1px solid #e4e0dc;
}

.tree th {
    font-weight: normal;
    background-color: #d6cfc9;
    border-color: #77716c;
}

.tree .name {
    width: auto;
    padding-left: 2px;
    text-align: left;
    overflow: hidden;
}

.tree td.name {
    padding-left: 20px;
}

.tree td.root {
    padding-left: 10px;
}

.tree .name svg {
    display: inline-block;
    width: 9px;
    height: 8px;
    margin-right: 3px;
    vertical-align: top;
}

.tree .current {
    font-weight: bold;
    color: #000;
}

.tree input {
    display: block;
    appearance: none;
    width: 7px;
    height: 7px;
    margin: auto;
    background-color: white;
    border: 1px solid #555;
}

.tree input[type="radio"] {
    border-radius: 50%;
}

.tree input[type="radio"]:checked {
    background: radial-gradient(#000 40%, #fff 50%);
}

.tree input[type="checkbox"]:checked {
    background: linear-gradient(135deg, #fff 35%, #000 35%, #000 65%, #fff 65%);
}

.scrollbar {
    display: flex;
    height: 8px;
    margin-top: auto;
    background-color: #ebe8e5;
}

.scrollbar button, .thumb {
    width: 8px;
    padding: 0 1px;
    background-color: #d6cfc9;
    border: 1px solid;
    border-color: #f4f1ee #77716c #77716c #f4f1ee;
}

.scrollbar svg {
    width: 4px;
    height: 6px;
}

.scrollbar .thumb {
    width: 26px;
    margin-right: auto;
}

.level-tabs {
    display: flex;
    height: 16px;
    padding: 1px 1px 3px 4px;
}

.level-tabs button {
    display: flex;
    align-items: center;
    gap: 2px;
    padding: 0 3px 0 2px;
    white-space: nowrap;
    border: 1px solid #5c5753;
}

.level-tabs .active {
    border-color: transparent #77716c #77716c #f4f1ee;
}

.level-tabs svg {
    width: 9px;
    height: 9px;
}

/* Model view */

.viewport {
    display: flex;
    flex: 1;
    min-width: 0;
    margin-left: 2px;
    background-color: black;
    border: 1px solid #2222a8;
    border-width: 0 2px 1px 1px;
}

.viewport svg {
    width: 100%;
    height: 100%;
}

.axis-label text {
    font-size: 7px;
    fill: #d8d8d8;
}

/* Bottom toolbar, status line and taskbar */

.toolbar.bottom {
    padding: 0 5px;
}

.bottom .combo {
    width: 24px;
    margin-left: 8px;
}

.bottom .pen select {
    padding-left: 5px;
}

.bottom .wide {
    margin-left: 5px;
}

.color {
    width: 15px;
    height: 13px;
    color: #9aa8ff;
    background-color: #0a16e8;
    border: 1px solid #444;
}

.drop {
    width: 9px;
    height: 14px;
    padding: 2px;
}

.drop svg {
    width: 5px;
    height: 6px;
}

.far {
    margin-left: 23px;
}

.status {
    display: grid;
    grid-template-columns: 54px 154px 40px 43px 40px 40px 26px 26px 13px 17px 47px 30px 1fr;
    align-items: center;
    height: 11px;
    white-space: nowrap;
    color: #555;
    border-top: 1px solid #a8a19b;
}

.status .sunk {
    height: 8px;
    border-left: 1px solid #b5aea8;
}

.status .dim {
    color: #aaa39d;
}

.taskbar {
    display: flex;
    align-items: center;
    gap: 2px;
    height: 15px;
    padding: 1px 2px;
    border-top: 1px solid #f4f1ee;
}

.taskbar svg {
    flex: none;
    width: 9px;
    height: 9px;
}

.taskbar button {
    display: flex;
    align-items: center;
    gap: 2px;
    height: 12px;
    padding: 0 2px;
    white-space: nowrap;
    border: 1px solid;
    border-color: #f4f1ee #5c5753 #5c5753 #f4f1ee;
}

.taskbar .start {
    margin-right: 4px;
    font-weight: bold;
}

.taskbar .active {
    font-weight: bold;
    background-color: #f4f1ee;
    border-color: #5c5753 #f4f1ee #f4f1ee #5c5753;
}

.tray {
    display: flex;
    align-items: center;
    gap: 2px;
    height: 12px;
    margin-left: auto;
    padding: 0 4px 0 2px;
    border: 1px solid;
    border-color: #8d8782 #f4f1ee #f4f1ee #8d8782;
}

.tray time {
    margin-left: 3px;
}
```
